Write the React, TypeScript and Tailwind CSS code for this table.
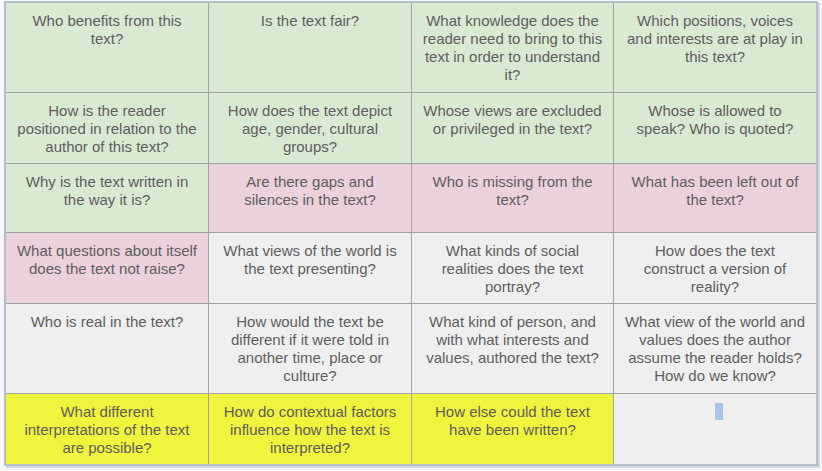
const G = 'bg-[#d9ead3]';
const P = 'bg-[#ead1dc]';
const W = 'bg-[#efefef]';
const Y = 'bg-[#eff43d]';

const cells: { text: string; bg: string }[] = [
  { text: 'Who benefits from this text?', bg: G },
  { text: 'Is the text fair?', bg: G },
  { text: 'What knowledge does the reader need to bring to this text in order to understand it?', bg: G },
  { text: 'Which positions, voices and interests are at play in this text?', bg: G },
  { text: 'How is the reader positioned in relation to the author of this text?', bg: G },
  { text: 'How does the text depict age, gender, cultural groups?', bg: G },
  { text: 'Whose views are excluded or privileged in the text?', bg: G },
  { text: 'Whose is allowed to speak? Who is quoted?', bg: G },
  { text: 'Why is the text written in the way it is?', bg: G },
  { text: 'Are there gaps and silences in the text?', bg: P },
  { text: 'Who is missing from the text?', bg: P },
  { text: 'What has been left out of the text?', bg: P },
  { text: 'What questions about itself does the text not raise?', bg: P },
  { text: 'What views of the world is the text presenting?', bg: W },
  { text: 'What kinds of social realities does the text portray?', bg: W },
  { text: 'How does the text construct a version of reality?', bg: W },
  { text: 'Who is real in the text?', bg: W },
  { text: 'How would the text be different if it were told in another time, place or culture?', bg: W },
  { text: 'What kind of person, and with what interests and values, authored the text?', bg: W },
  { text: 'What view of the world and values does the author assume the reader holds? How do we know?', bg: W },
  { text: 'What different interpretations of the text are possible?', bg: Y },
  { text: 'How do contextual factors influence how the text is interpreted?', bg: Y },
  { text: 'How else could the text have been written?', bg: Y },
  { text: '', bg: W },
];

export default function App() {
  return (
    <div className="w-[822px] h-[471px] bg-[#f6f7f9] overflow-hidden" style={{ fontFamily: '"Liberation Sans", Arial, sans-serif' }}>
      <div className="ml-[4px] mt-[1px] inline-block border-2 border-[#b3bece] shadow-[2px_2px_0_#d3d9e2]">
        <div className="grid grid-cols-[202px_202px_201px_202px] grid-rows-[89px_70px_68px_70px_89px_70px] gap-px bg-[#a3a3a3]">
          {cells.map((c, i) => (
            <div key={i} className={`${c.bg} px-[9px] pt-[9px] text-center text-[15px] leading-[18px] text-[#5e5e5e]`}>
              {c.text ? (
                c.text
              ) : (
                <div className="flex justify-center">
                  <div className="ml-[8px] h-[17px] w-[8px] bg-[#a9c4ea]" />
                </div>
              )}
            </div>
          ))}
        </div>
      </div>
    </div>
  );
}
